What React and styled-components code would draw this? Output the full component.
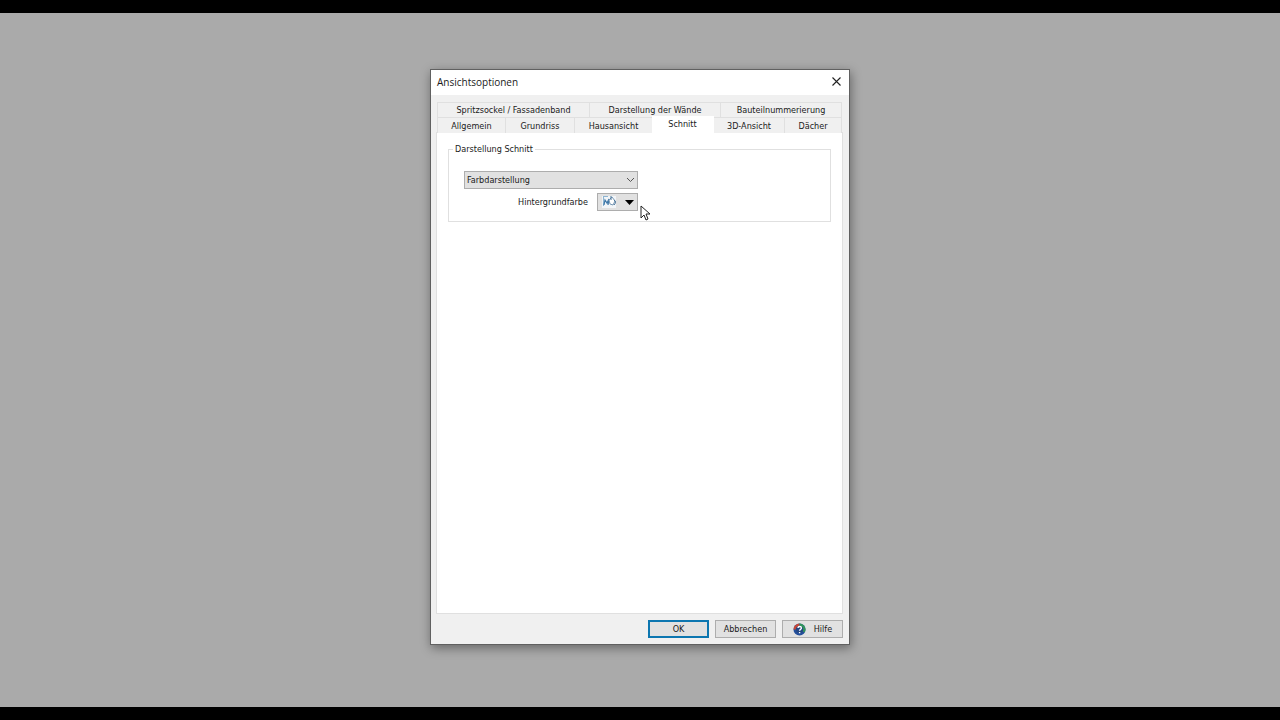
import React, { useState } from 'react'
import styled, { createGlobalStyle } from 'styled-components';

const GlobalStyle = createGlobalStyle`
  * {
    box-sizing: border-box;
  }

  body {
    margin: 0;
    background: #000;
    color: #1a1a1a;
    font-family: "DejaVu Sans Condensed", "Noto Sans", sans-serif;
    font-size: 9px;
    line-height: 14px;
  }

  button, select {
    font: inherit;
    color: inherit;
  }
`;

const Desktop = styled.main`
  display: grid;
  place-items: center;
  min-height: 100vh;
  padding-bottom: 6px;
  background: #aaa;
  border: solid #000;
  border-width: 13px 0;
`;

const Dialog = styled.section`
  width: 420px;
  max-width: 100%;
  background: #f0f0f0;
  border: 1px solid #606060;
  box-shadow: 1px 3px 10px rgba(0, 0, 0, 0.4);
`;

const TitleBar = styled.header`
  display: flex;
  align-items: center;
  justify-content: space-between;
  height: 25px;
  padding: 0 6px 2px;
  background: #fff;
`;

const Title = styled.h1`
  margin: 0;
  font-family: "Open Sans", sans-serif;
  font-size: 10px;
  font-weight: 400;
`;

const CloseButton = styled.button`
  display: flex;
  padding: 0;
  border: 0;
  background: none;
`;

const Body = styled.div`
  padding: 7px 6px 6px 5px;
`;

const TabRow = styled.div`
  display: grid;
  grid-template-columns: ${(props) => props.$columns};
  height: 15px;
  margin: 0 1px;
  border-left: 1px solid #e0e0e0;
`;

const Tab = styled.button`
  padding: 0;
  border: solid #e0e0e0;
  border-width: 1px 1px 0 0;
  background: #f0f0f0;
  line-height: 14px;
  white-space: nowrap;

  &[aria-selected='true'] {
    z-index: 1;
    margin: -1px 0 -1px -1px;
    padding-bottom: 3px;
    border-color: #fff;
    background: #fff;
  }
`;

const Panel = styled.div`
  min-height: 482px;
  padding: 8px 11px;
  background: #fff;
  border: 1px solid #e0e0e0;
`;

const Group = styled.fieldset`
  min-width: 0;
  margin: 0;
  padding: 14px 15px 10px;
  border: 1px solid #e0e0e0;
`;

const Legend = styled.legend`
  margin-left: -11px;
  padding: 0 2px;
  line-height: 16px;
`;

const Fields = styled.div`
  display: flex;
  flex-direction: column;
  gap: 4px;
  width: 174px;
`;

const SelectBox = styled.div`
  position: relative;
  display: flex;

  svg {
    position: absolute;
    top: 6px;
    right: 3px;
    pointer-events: none;
  }
`;

const Select = styled.select`
  appearance: none;
  width: 100%;
  height: 18px;
  padding: 0 2px;
  border: 1px solid #adadad;
  border-radius: 0;
  background: #e1e1e1;
`;

const ColorRow = styled.div`
  position: relative;
  display: flex;
  align-items: center;
  justify-content: flex-end;
  gap: 9px;
`;

const ColorButton = styled.button`
  display: flex;
  align-items: center;
  justify-content: space-between;
  width: 41px;
  height: 18px;
  padding: 0 3px 0 4px;
  border: 1px solid #adadad;
  background: #e1e1e1;
`;

const Pointer = styled.svg`
  position: absolute;
  top: 12px;
  left: 100%;
  margin-left: 2px;
  pointer-events: none;
`;

const Footer = styled.footer`
  display: flex;
  justify-content: flex-end;
  gap: 6px;
  padding-top: 6px;
`;

const Button = styled.button`
  display: flex;
  align-items: center;
  justify-content: center;
  gap: 8px;
  width: 61px;
  height: 18px;
  padding: 0;
  border: ${(props) => (props.$primary ? '2px solid #0c76b0' : '1px solid #adadad')};
  background: #e1e1e1;
`;

const backTabs = ['Spritzsockel / Fassadenband', 'Darstellung der Wände', 'Bauteilnummerierung'];
const frontTabs = ['Allgemein', 'Grundriss', 'Hausansicht', 'Schnitt', '3D-Ansicht', 'Dächer'];

const PaintIcon = () => (
  <svg width="15" height="13" viewBox="0 0 15 13" aria-hidden="true">
    <path d="M0 0h14v12H0z" fill="#f2f5f8" />
    <path d="M1 0h5v1H2v9H1z" fill="#8eb5d2" />
    <path d="M2 9l1-5 2 3 2-4-1 6" fill="none" stroke="#3f78a8" strokeWidth="1.2" />
    <path d="M7 4l3-3 3 4-2 4-3-1z" fill="#fff" stroke="#7898b4" />
    <path d="M9 0v4M12 4c2 1 2 3 0 5" fill="none" stroke="#477297" />
  </svg>
);

const HelpIcon = () => (
  <svg width="13" height="13" viewBox="0 0 13 13" aria-hidden="true">
    <circle cx="6.5" cy="6.5" r="6" fill="#244f9b" />
    <path d="M6.5.5a6 6 0 0 0-6 6h3a3 3 0 0 1 3-3z" fill="#c64535" />
    <path d="M6.5.5a6 6 0 0 1 5.2 9l-2.6-1.5A3 3 0 0 0 6.5 3.5z" fill="#30935b" />
    <circle cx="6.5" cy="6.5" r="3.6" fill="#244783" />
    <path d="M5 5c0-2 3.4-2 3.4 0 0 1.5-1.8 1.3-1.8 2.7M6.6 9v1.2" fill="none" stroke="#fff" strokeWidth="1.4" />
  </svg>
);

const App = () => {
  const [activeTab, setActiveTab] = useState('Schnitt');

  const renderTab = (name) => (
    <Tab
      key={name}
      type="button"
      role="tab"
      aria-selected={activeTab === name}
      onClick={() => setActiveTab(name)}
    >
      {name}
    </Tab>
  );

  return (
    <>
      <GlobalStyle />
      <Desktop>
        <Dialog role="dialog" aria-labelledby="dialog-title">
          <TitleBar>
            <Title id="dialog-title">Ansichtsoptionen</Title>
            <CloseButton type="button" aria-label="Schließen">
              <svg width="13" height="13" viewBox="0 0 13 13">
                <path d="M2.5 2.5l8 8M10.5 2.5l-8 8" stroke="#222" strokeWidth="1.1" />
              </svg>
            </CloseButton>
          </TitleBar>
          <Body>
            <div role="tablist" aria-label="Ansichtsoptionen">
              <TabRow $columns="152fr 131fr 121fr">{backTabs.map(renderTab)}</TabRow>
              <TabRow $columns="68fr 69fr 78fr 61fr 71fr 57fr">{frontTabs.map(renderTab)}</TabRow>
            </div>
            <Panel role="tabpanel" aria-label={activeTab}>
              <Group>
                <Legend>Darstellung Schnitt</Legend>
                <Fields>
                  <SelectBox>
                    <Select aria-label="Darstellung Schnitt" defaultValue="farbe">
                      <option value="farbe">Farbdarstellung</option>
                    </Select>
                    <svg width="9" height="6" viewBox="0 0 9 6">
                      <path d="M1 1l3.5 3.5L8 1" fill="none" stroke="#555" />
                    </svg>
                  </SelectBox>
                  <ColorRow>
                    <label htmlFor="background-color">Hintergrundfarbe</label>
                    <ColorButton id="background-color" type="button">
                      <PaintIcon />
                      <svg width="9" height="5" viewBox="0 0 9 5">
                        <path d="M0 0h9L4.5 5z" fill="#000" />
                      </svg>
                    </ColorButton>
                    <Pointer width="11" height="17" viewBox="0 0 11 17" aria-hidden="true">
                      <path d="M1 1v12l3-3 2 5 2-1-2-5h4z" fill="#fff" stroke="#222" />
                    </Pointer>
                  </ColorRow>
                </Fields>
              </Group>
            </Panel>
            <Footer>
              <Button type="button" $primary>OK</Button>
              <Button type="button">Abbrechen</Button>
              <Button type="button"><HelpIcon />Hilfe</Button>
            </Footer>
          </Body>
        </Dialog>
      </Desktop>
    </>
  );
}

export default App;
